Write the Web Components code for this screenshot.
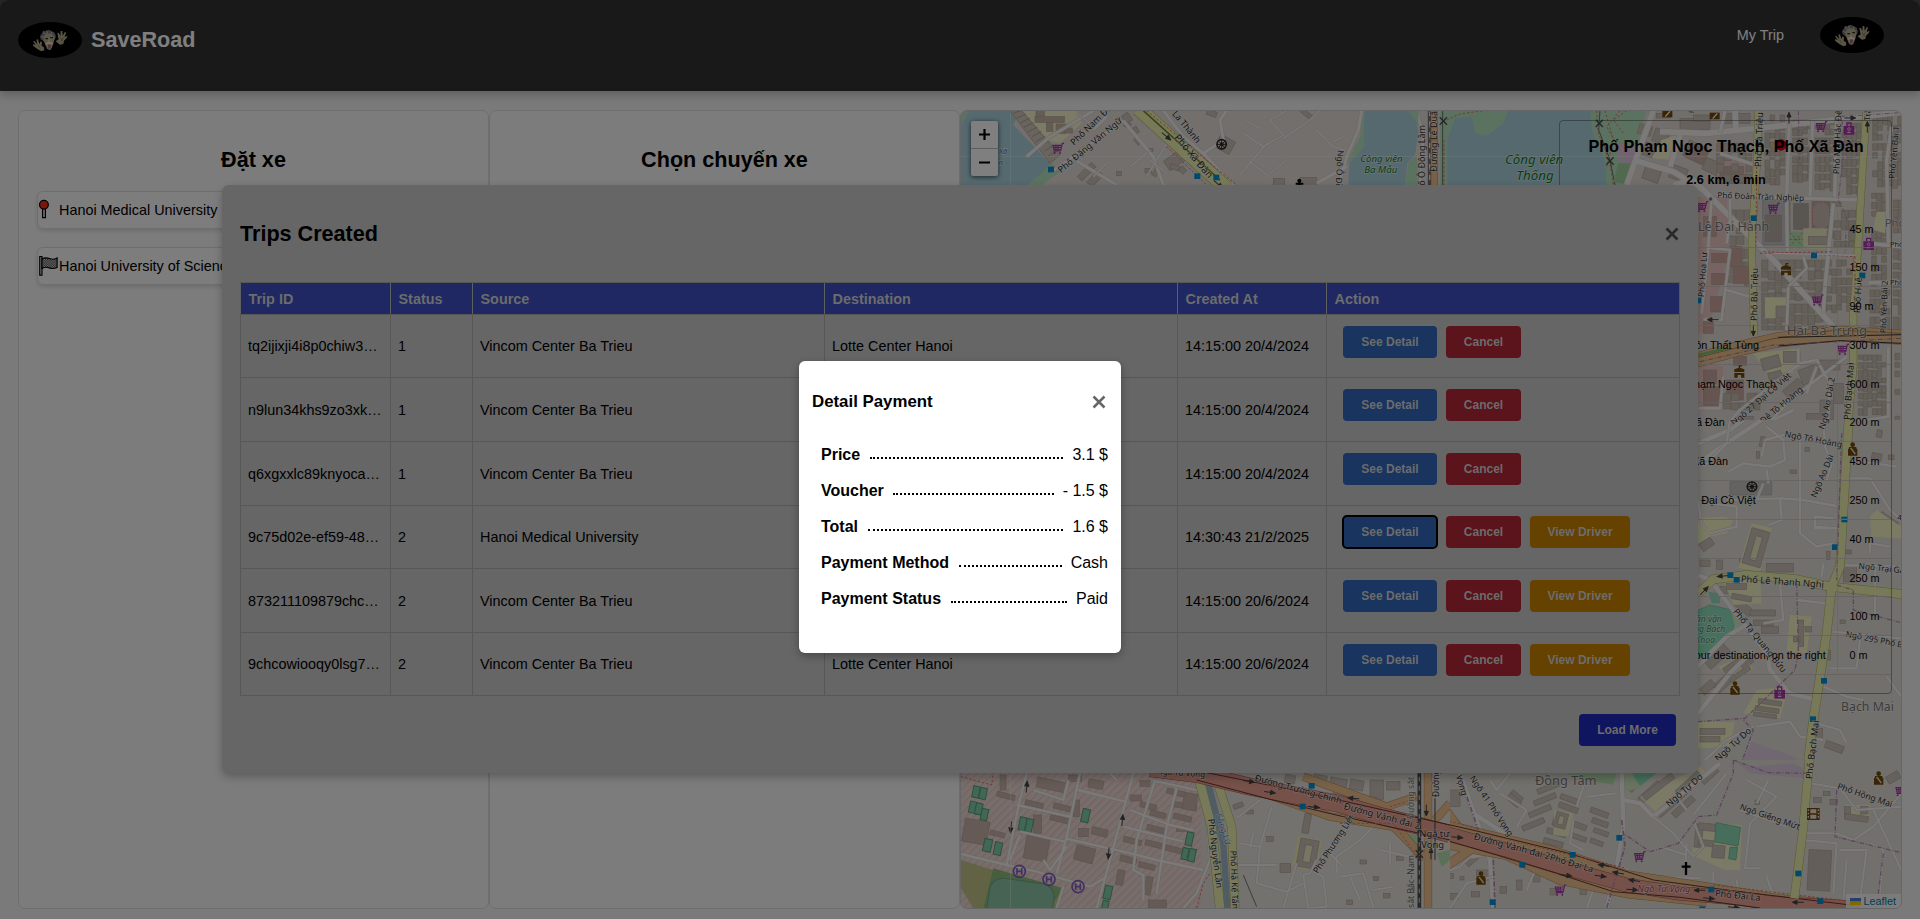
<!DOCTYPE html>
<html lang="vi">
<head>
<meta charset="utf-8">
<title>SaveRoad</title>
<style>
html,body{margin:0;padding:0;height:100%;overflow:hidden;background:#484d55}
body{font-family:"Liberation Sans",Arial,sans-serif;font-size:14.4px;color:#000}
</style>
</head>
<body>
<save-road-app></save-road-app>
<script>
const define = (name, html, setup) => customElements.define(name, class extends HTMLElement {
  connectedCallback() {
    if (this.shadowRoot) return;
    const root = this.attachShadow({ mode: 'open' });
    root.innerHTML = typeof html === 'function' ? html(this) : html;
    if (setup) setup(root, this);
  }
});

/* ---------- brand picture ---------- */
define('brand-avatar', `
<style>:host{display:block;width:64px;height:36px}svg{display:block}</style>
<svg width="64" height="36" viewBox="24 36 192 108">
  <ellipse cx="120" cy="90" rx="96" ry="54" fill="#000"/>
  <path d="M92 88L90 78L96 70L99 62L108 64L115 59L125 63L134 68L138 80L133 90L127 94L101 94Z" fill="#77777d"/>
  <path d="M100 68l7 5M110 62l2 9M126 66l-4 8M94 80l8 2M133 76l-6 5" stroke="#c4c4cb" stroke-width="3"/>
  <path d="M103 76L112 70L127 73L134 84L130 101L125 114L120 121L111 116L105 101L100 91Z" fill="#b9af8f"/>
  <path d="M106 86h8M121 83h8" stroke="#2c2822" stroke-width="4"/>
  <path d="M117 87l-3 10 7 1z" fill="#dacfac"/>
  <path d="M106 99l11-4 12 3-2 6-10-3-9 4z" fill="#e4e0d6"/>
  <path d="M114 104h9l-2 11-6 1z" fill="#a9606b"/>
  <path d="M103 121L94 124L82 117L70 108L68 102L77 105L69 94L73 93L82 102L79 89L84 88L88 102L92 94L96 97L95 107L102 112Z" fill="#b3a988"/>
  <path d="M137 94L146 88L144 80L142 68L147 69L151 79L152 63L157 63L158 77L165 65L168 68L164 81L173 77L170 84L162 92L160 102L150 104Z" fill="#b3a988"/>
  <path d="M82 104l8 10M151 82l5 12M160 82l-4 12" stroke="#6d6650" stroke-width="2"/>
</svg>`);

/* ---------- top bar ---------- */
define('top-bar', `
<style>
:host{display:flex;justify-content:space-between;align-items:flex-start;box-sizing:border-box;height:91px;padding:17px 36px 0 18px;background:#333;color:#fff;border-radius:9px 9px 0 0;box-shadow:0 4px 9px rgba(0,0,0,.22);position:relative}
.brand{display:flex;align-items:center;gap:9px;padding-top:5px;font-weight:bold;font-size:21.6px;line-height:34px}
.brand span{padding-bottom:1px}
nav{display:flex;align-items:center;gap:36px;font-size:14.4px}
</style>
<div class="brand"><brand-avatar></brand-avatar><span>SaveRoad</span></div>
<nav><span>My Trip</span><brand-avatar></brand-avatar></nav>`);

/* ---------- cards ---------- */
define('side-card', `
<style>
:host{display:flex;flex-direction:column;box-sizing:border-box;background:#f9f9f9;border:1px solid #ddd;border-radius:7px;padding:18px}
h2{font-size:21.6px;line-height:25px;margin:18px 0 19px;text-align:center}
.body{display:flex;flex-direction:column;gap:17.5px}
</style>
<h2><slot name="title"></slot></h2><div class="body"><slot></slot></div>`);

define('place-field', `
<style>
:host{display:flex;align-items:center;box-sizing:border-box;height:38px;background:#fbfbfb;border:1px solid #ddd;border-radius:6px;box-shadow:0 2px 4px rgba(0,0,0,.13);font-size:14.4px;white-space:nowrap}
.icon{display:flex;flex:none;width:21px}
</style>
<span class="icon"><slot name="icon"></slot></span><span><slot></slot></span>`);

/* ---------- map ---------- */
const pts = s => 'M' + s.trim().split(/\s+/).join('L');
const area = (s, f, st = 'none') => `<path d="${pts(s)}Z" fill="${f}" stroke="${st}" stroke-width="2"/>`;
const line = (s, c, w, x = '') => `<path d="${pts(s)}" fill="none" stroke="${c}" stroke-width="${w}" stroke-linejoin="round" ${x}/>`;
const roads = (list, w, c = '#f6f4f3', k = '#d3cec9') => list.map(s => line(s, k, w + 3)).join('') + list.map(s => line(s, c, w)).join('');
const yellow = (list, w) => roads(list, w, '#f0f3b2', '#b0b55c');
const orange = (list, w) => roads(list, w, '#eec493', '#b98a50');
const trunk = (list, w) => roads(list, w, '#eaa292', '#a8584c');
const dash = (list, c = '#ef6f68', w = 3, d = '7 6') => list.map(s => line(s, c, w, `stroke-dasharray="${d}"`)).join('');
const label = (t, x, y, r = 0, s = 30, c = '#2e2e2e', x2 = '') =>
  `<text transform="translate(${x} ${y}) rotate(${r})" font-size="${s}" fill="${c}" paint-order="stroke" stroke="rgba(255,255,255,.55)" stroke-width="4" ${x2}>${t}</text>`;
const bld = (s, f = '#cdc2b8') => s.trim().split(/\s*;\s*/).map(q => {
  const [x, y, w, h, r = 0] = q.split(/[ ,]+/).map(Number);
  return `<rect x="${x}" y="${y}" width="${w}" height="${h}" transform="rotate(${r} ${x + w / 2} ${y + h / 2})" fill="${f}" stroke="#b3a699" stroke-width="2"/>`;
}).join('');
let seed = 11;
const rnd = () => (seed = (seed * 16807) % 2147483647) / 2147483647;
const dense = (x0, y0, x1, y1, p = 15, q = 24, r = 0) => {
  let d = '';
  for (let y = y0; y < y1 - 6; y += q + 3) for (let x = x0; x < x1 - 6; x += p) {
    if (rnd() < .12) continue;
    const w = Math.min(p - 1, x1 - x), h = Math.min(q * (.6 + rnd() * .5), y1 - y);
    d += `M${x} ${y.toFixed(0)}h${w}v${h.toFixed(0)}h${-w}z`;
  }
  return `<path d="${d}" transform="rotate(${r} ${(x0 + x1) / 2} ${(y0 + y1) / 2})" fill="#cabfb5" stroke="#b5a89b" stroke-width="2"/>`;
};
const stop = s => s.split(' ').map(q => { const [x, y] = q.split(','); return `<rect x="${x - 9}" y="${y - 8}" width="18" height="17" fill="#0092da"/>`; }).join('');
const at = (x, y, g, r = 0) => `<g transform="translate(${x} ${y}) rotate(${r})">${g}</g>`;
const ARROW = '<path d="M0 16V-6M-6-4L0-18L6-4Z" fill="#444" stroke="#444" stroke-width="3"/>';
const BROWN = '<rect x="-15" y="-10" width="30" height="20" fill="#734a08"/><path d="M-6 8L8-8" stroke="#fff" stroke-width="4"/>';
const COURT = '<circle cy="-14" r="7" fill="#734a08"/><path d="M-11-7h22v5h3v21h-28v-21h3z" fill="#734a08"/><path d="M-6-4L8 14" stroke="#e8ddd0" stroke-width="4"/>';
const TOWN = '<path d="M-15 18V4h30v14h-10v-8h-10v8zM-15 1v-8L-2-12v-7h9v4h-5v3l13 5v8z" fill="#734a08"/>';
const CART = '<path d="M17-15h-5l-5 23M10-9h-26l3 13h20M-8-9l1 13M-1-9v13M-15-3h24M7 8h-22" fill="none" stroke="#ac39ac" stroke-width="3.500"/><circle cx="-11" cy="14" r="3" fill="#ac39ac"/><circle cx="5" cy="14" r="3" fill="#ac39ac"/>';
const SHOP = '<path d="M-16-8h32v26h-32z" fill="#ac39ac"/><path d="M-6-8v-9h12v9" fill="none" stroke="#ac39ac" stroke-width="4"/><circle cy="1" r="4" fill="none" stroke="#fff" stroke-width="2"/><path d="M-5 11h10" stroke="#fff" stroke-width="3"/>';
const WHEEL = '<circle r="14" fill="none" stroke="#2d2d2d" stroke-width="5"/><circle r="6" fill="#2d2d2d"/><path d="M0-16V16M-16 0H16M-11-11L11 11M11-11L-11 11" stroke="#2d2d2d" stroke-width="3"/>';
const CROSSX = '<path d="M-11-11L11 11M11-11L-11 11" stroke="#4a4a4a" stroke-width="4"/>';
const HELI = '<circle r="18" fill="none" stroke="#8461c4" stroke-width="5"/><path d="M-7-10V10M7-10V10M-7 0H7" stroke="#8461c4" stroke-width="5"/>';
const BAR = '#6d6d6d';
const darkG = '#0d7a28';

const topStrip = `
<rect x="33" y="32" width="1437" height="240" fill="#e4dfd8"/>
${area('33,32 210,32 190,75 305,195 235,255 33,255', '#aad3df')}
${area('33,32 60,32 33,75', '#b9e4c0')}${area('235,255 305,190 330,215 275,255', '#b9e4c0')}
${area('215,32 380,32 395,70 330,130 290,120 230,60', '#f7f6cf')}
${bld('255 50 88 17;289 67 20 27;258 32 25 18;318 72 30 28;345 84 22 15', '#c9b9a4')}
${area('180,32 215,32 330,165 300,190', '#d3c8bd', '#a69a8e')}
<path d="M190 40l28-10M200 54l28-12M212 68l28-14M222 82l28-14M234 96l28-15M246 110l28-16M258 125l26-16M270 139l26-16M283 153l26-16M294 168l24-14" stroke="#9c9085" stroke-width="2"/>
${bld('520 40 22 28 -35;522 68 20 14 20;548 84 20 12 60;556 112 14 22 -40;595 145 14 10;645 165 55 35 -35;660 195 30 14 20;380 205 60 20 -45;410 225 50 22 -45;500 215 14 12;585 205 20 14;800 112 50 42 30;970 236 34 20;1050 232 50 24;690 200 16 20 -40;1050 35 40 14 40;770 32 30 16 20;610 205 14 24 30')}
${roads(['230,170 300,110 430,32', '305,215 520,62', '520,62 560,110 610,170 640,255', '375,180 500,255', '640,32 700,110 760,160 850,255', '760,160 820,120 810,60 830,32', '430,90 470,50', '1235,32 1225,90 1190,170 1180,210 1165,255', '1100,250 1190,200', '1400,40 1420,100 1410,255'], 9)}
${roads(['880,100 940,140 1000,105 960,60 1010,32', '885,60 930,85', '1000,115 1080,60 1110,32', '1100,90 1150,140 1185,150', '1150,125 1180,110', '870,225 950,130', '590,230 650,130', '600,180 650,220', '540,200 600,150', '430,230 470,190', '960,220 1010,180', '420,70 380,40', '900,185 960,230'], 4)}
${yellow(['565,25 830,265'], 42)}${line('580,32 810,240', '#6a8d2e', 5)}${dash(['590,32 860,255', '650,140 770,255'])}
${area('1243,32 1375,32 1400,60 1405,100 1395,165 1372,190 1365,255 1195,255 1198,190 1240,140', '#aad3df')}
${area('1240,32 1243,140 1200,185 1190,190 1230,110', '#b9e4c0')}${area('1375,190 1400,165 1405,255 1365,255', '#b9e4c0')}${area('1375,32 1405,32 1405,75', '#b9e4c0')}
${line('1439,32 1439,255', '#77716c', 11)}${line('1439,32 1439,255', '#eee', 4, 'stroke-dasharray="16 16"')}
${orange(['1453,32 1453,255'], 18)}${dash(['1480,32 1480,255', '1492,32 1492,255'], '#e07a4f')}
${at(325, 145, CART)}${stop('303,208 742,228 799,232')}${at(815, 133, WHEEL)}${at(648, 108, ARROW, 130)}${at(804, 252, ARROW, 130)}
${at(1480, 63, CROSSX)}<circle cx="1048" cy="242" r="6"/><path d="M1037 251h23M1048 245v12" stroke="#000" stroke-width="6"/>
${label('Phố Nam Đồng', 372, 137, -44, 27)}${label('Phố Đặng Văn Ngữ', 333, 220, -40, 27)}${label('La Thành', 665, 42, 50, 27)}
${label('Phố Xã Đàn', 671, 113, 50, 30)}${label('Phố Ô Đông Lầm', 1426, 290, -90, 27)}${label('Đường Lê Duẩn', 1461, 215, -90, 27)}${label('Ngõ Ô Đồng Lầm', 1163, 150, 93, 25)}
${label('Công viên', 1231, 186, 0, 29, darkG, 'font-style="italic"')}${label('Ba Mẫu', 1243, 218, 0, 29, darkG, 'font-style="italic"')}
${label('Xã', 146, 162, 0, 24, '#4f83ad', 'font-style="italic"')}${label('Đàn', 116, 196, 0, 24, '#4f83ad', 'font-style="italic"')}`;

const rightTop = `
${area('0,32 620,32 560,255 0,255', '#b9e4c0')}
${area('205,32 450,32 458,100 495,180 500,255 22,255 22,120 45,55 95,50 105,100 140,108 190,70', '#aad3df')}
${dash(['12,120 12,255', '20,60 60,42 130,32', '470,32 475,100 510,190 520,255', '495,32 520,120 500,200', '540,32 500,80 540,150', '560,32 520,60 550,100'])}
${line('8,32 8,255', BAR, 3)}${line('480,32 476,90 510,180 525,255', BAR, 3)}
${area('535,190 580,190 570,255 520,245', '#a0d39f')}${area('530,130 600,140 590,192 535,185', '#e3c9df')}
${area('620,32 1384,32 1384,1020 700,1020 700,255 560,255', '#e3ddd6')}
${bld('595 75 40 30 15;640 90 45 40 20;610 205 50 38 20;650 40 40 14;720 55 90 34;735 130 60 50 25;790 185 70 38 25;830 205 80 45 0;610 130 36 40 20;690 200 50 40 20;850 40 80 30;760 45 50 20')}
${area('665,120 710,105 700,180 635,175', '#f8f6d0')}${area('830,165 920,180 930,240 830,235', '#ecccc6')}
${bld('740 140 60 45 25;840 200 70 40', '#cdaea6')}
${dense(975, 45, 1040, 255)}${dense(1058, 60, 1115, 255)}${dense(1125, 60, 1182, 280)}${dense(1205, 70, 1262, 290)}${dense(1298, 50, 1384, 270)}${dense(830, 130, 935, 255, 22, 28)}
${dense(1160, 300, 1250, 440, 22, 28)}${dense(1295, 280, 1340, 560)}${dense(1360, 300, 1384, 700)}${dense(965, 480, 1160, 690, 20, 30)}${dense(1160, 480, 1240, 640)}${dense(865, 330, 932, 560, 24, 36)}${dense(1290, 570, 1350, 690)}
${area('775,290 860,290 870,450 800,700 775,700', '#efc9c4')}${bld('815 460 50 28;815 520 46 34;812 590 42 46;790 660 30 40;870 440 36 60;880 500 50 50;790 350 40 60', '#cfa79e')}
${area('968,300 1050,300 1050,435 968,435', '#c9c6c8', '#a9a6a8')}${bld('975 345 50 80;1060 310 45 78;1116 305 52 80', '#b9afa7')}
<rect x="1117" y="306" width="52" height="80" rx="24" fill="#cdbdb5" stroke="#ef8178" stroke-width="3" stroke-dasharray="6 5"/><rect x="1062" y="308" width="44" height="82" rx="20" fill="#b2aaa3"/>
${area('1048,395 1090,395 1090,440 1048,440', '#b7e3b3')}${dash(['1050,398 1088,438', '1088,398 1050,438', '1048,418 1090,418'])}
${area('1090,385 1160,385 1160,450 1090,445', '#efecc7')}${bld('1105 410 60 24')}
${area('975,592 1040,592 1045,655 975,655', '#f7f6c9')}${bld('1008 618 28 36')}${area('1310,335 1340,335 1335,400 1300,390', '#f7f6c9')}
${area('940,760 1080,745 1060,820 980,815', '#f7f6c9')}${bld('965 770 55 36 -15;1030 755 50 32;985 815 40 20 -15')}
${area('775,780 850,800 840,925 775,925', '#efc9c4')}${bld('790 810 40 40;790 860 50 56;860 840 50 60;880 770 40 26', '#cda9a0')}
${dense(850, 880, 960, 930, 24, 26)}${bld('1080 800 60 46 -20;1030 850 60 30 -40;1140 900 40 60;1100 940 50 40;900 950 40 30;980 970 50 24')}${dense(1255, 765, 1345, 950, 14, 20)}${dense(1365, 760, 1384, 980)}${bld('1140 780 60 30;1180 850 30 60')}
${roads(['700,255 760,240 800,280 1000,480 1180,680', '640,32 560,255', '580,180 700,215 790,270', '660,95 800,100 1000,80 1384,36', '720,105 690,200', '885,32 888,90'], 17)}
${roads(['1048,70 1040,290 1042,455', '1118,60 1110,290', '1190,32 1184,300', '1355,80 1340,180 1345,430', '840,160 945,195', '855,32 840,100'], 10)}
${roads(['830,285 1000,292 1260,300', '1180,310 1155,560 1150,640', '1290,430 1384,440', '1285,548 1384,548'], 11)}
${roads(['815,290 805,440 785,640', '800,442 870,450 845,660 790,658', '870,290 870,360 860,430', '860,570 930,590', '1045,560 1100,505 1090,470', '1045,560 1040,690', '775,925 840,925 850,830', '820,1020 900,930 1080,790 1130,780 1170,850 1160,1020', '940,1020 1050,900 1220,770', '1075,800 1075,745', '1130,800 1100,880', '1345,740 1345,950 1250,965', '1250,965 1310,1000 1384,1000', '1000,960 1060,930', '700,950 775,950'], 8)}
${yellow(['955,32 950,200 935,420 942,705', '1280,32 1268,200 1255,430 1240,640 1240,800 1220,1020'], 20)}
${dash(['970,455 1245,470', '950,200 948,440', '1245,470 1245,640', '960,460 1180,455'])}${line('1000,460 1245,466', '#fff', 4)}
${dash(['1205,60 1215,120 1195,300 1220,350 1215,460', '1200,50 1384,38', '1075,32 1080,200'], '#b98db8', 3, '14 5 3 5')}
${orange(['770,780 900,745 1010,720 1200,700 1384,712'], 42)}${line('775,772 1000,716 1190,690 1384,700', '#b78548', 3)}${line('1015,712 1384,704M1015,738 1200,722 1384,730', '#333', 3)}${dash(['780,785 1000,735 1384,715'], '#a3778d', 3, '14 5 3 5')}${line('775,765 860,745', '#7fc47a', 8)}
${at(10, 63, CROSSX)}${at(478, 70, CROSSX)}${at(510, 183, CROSSX)}${at(682, 42, BROWN)}${at(824, 48, BROWN)}${at(1047, 55, ARROW)}${at(1229, 54, ARROW, 90)}${at(1282, 82, ARROW)}${at(940, 690, ARROW, 180)}${at(820, 659, ARROW, -90)}
${at(1145, 80, CART)}${at(1227, 86, SHOP)}${at(1002, 325, CART)}${at(788, 320, CART)}${at(1134, 600, CART)}${at(1210, 748, CART)}${at(1286, 432, SHOP)}${at(1038, 508, TOWN)}${at(898, 815, TOWN)}
<circle cx="1023" cy="135" r="17" fill="#e00015"/><circle cx="812" cy="297" r="5" fill="#777"/>
${stop('941,354 1122,466 1267,526 775,601')}
${label('Công viên', 195, 192, 0, 40, darkG, 'font-style="italic"')}${label('Thống', 229, 240, 0, 40, darkG, 'font-style="italic"')}
${label('Phố Đoàn Trần Nghiệp', 832, 294, 2, 24.500)}${label('Phố Bà Triệu', 964, 202, -88, 28)}${label('Phố Bà Triệu', 951, 663, -89, 27)}${label('Phố Huế', 1260, 640, -87, 27)}${label('Phố Mai Hắc Đế', 1198, 223, -88, 26)}${label('Phố Yên Bái 1', 1364, 237, -85, 25)}${label('Phố Yên Bái 2', 1338, 700, -88, 25)}${label('Phố Hoa Lư', 792, 592, -86, 25)}
${label('Lê Đại Hành', 774, 394, 0, 37.500, '#777')}${label('Hai Bà Trưng', 1040, 706, 0, 39.500, '#777')}${label('Phố', 1334, 381, 0, 34, '#888')}${label('Phố', 1350, 440, 0, 22)}${label('Phố', 1350, 554, 0, 22)}
${label('Ngõ 27 Đại Cồ Việt', 884, 978, -41, 26)}${label('Đê Tô Hoàng', 970, 972, -40, 26)}${label('Ngõ Ao Dài 2', 1157, 990, -80, 26)}${label('Phố Bạch Mai', 1230, 960, -86, 27)}${label('Trần', 1290, 62, -88, 24)}${label('P', 762, 40, -88, 22)}`;

const rightMid = `
${area('24,0 634,0 634,1040 24,1040', '#e5e0d9')}
${bld('210 50 14 30 10;345 82 14 12;200 95 8 20;560 30 16 22 10;545 100 30 20 10;596 105 16 14;150 410 60 30 -10;30 420 30 20;80 420 18 28;90 500 60 20;130 550 60 24 40;460 440 40 46;455 390 30 12;410 395 10 24;410 690 12 30;30 360 40 26 -35;450 600 16 10;300 150 20 10;565 290 60 20 35;230 430 80 26;180 570 76 18;190 600 60 16;215 620 50 20;40 690 80 36 -42;70 770 70 30 -42;30 790 46 24 -42;150 720 40 20 -42;380 925 18 34;405 970 56 22 20')}
${area('24,295 100,290 130,300 110,340 60,350 24,370', '#f7f6c9')}${area('185,310 245,325 210,455 145,445', '#f7f6c9')}${bld('170 328 56 110 16')}${bld('188 348 20 74 16', '#efecc7')}
${area('540,290 560,270 634,320 634,355 545,350', '#f7f6c9')}${area('95,470 210,470 215,550 130,555', '#f7f6c9')}${bld('110 490 60 18;125 525 60 16 10')}${area('300,585 365,590 350,700 290,695', '#f7f6c9')}${bld('325 600 16 80;345 620 20 16;310 650 20 16')}
${area('85,740 150,710 190,745 130,790', '#f7f6c9')}${bld('105 722 70 50 -35')}${bld('122 736 34 22 -35', '#efecc7')}${area('200,810 295,800 270,895 160,880', '#f7f6c9')}${bld('205 840 70 14 8;195 862 72 14 8;190 880 70 12 8')}${area('24,905 135,905 120,980 24,985', '#f7f6c9')}${bld('30 925 75 18;30 950 60 16')}
${area('55,515 90,520 90,550 65,550', '#8fe0bd')}${area('24,570 60,555 125,570 135,610 120,650 90,680 24,710', '#8fe0bd', '#6dbf98')}${area('90,540 160,600 140,640 120,560', '#cfeecb')}
${area('120,185 245,185 245,225 120,225', '#c9c6c5', '#b0acab')}
${area('185,965 300,1005 345,1030 340,1060 225,1050 150,1030', '#e3cfe2')}
${roads(['24,465 60,480 230,700 240,750 300,820 380,840', '24,740 60,700 110,650 160,620', '24,880 120,760 190,690', '24,70 120,30 160,0', '40,120 80,90 215,0'], 13)}
${roads(['120,0 110,70 40,140', '115,155 160,130 240,140 285,120 280,60 230,20', '330,60 330,340 380,380 430,370', '110,240 270,235 340,240 440,258', '60,340 140,320 140,260 60,250', '440,175 540,175 600,270 634,300', '400,0 405,80 425,130 410,180', '270,235 275,300 235,315', '375,320 440,325 375,325 375,290 430,295', '440,435 634,440', '430,635 634,655', '590,770 634,830', '420,745 500,745 510,660', '400,800 470,830 520,840', '24,240 34,310 50,330', '320,540 410,550', '400,430 395,470', '230,150 235,190', '215,110 225,60 300,40', '380,910 450,930 470,970', '200,920 300,905 330,950 400,960', '24,1040 110,960 190,920', '270,490 280,600 220,610', '555,440 555,600', '540,400 540,370 600,380', '480,120 620,140', '220,190 200,240'], 7)}
${yellow(['476,0 450,440 425,500 410,640 370,900 350,1060', '24,520 70,478 170,465 320,478 420,500 634,522'], 25)}
${dash(['455,40 440,480'], '#b98db8', 4, '14 5 3 5')}${dash(['320,490 325,700 315,750 160,900 190,930 150,1040', '24,905 165,895', '440,495 490,510 490,570 634,608'], '#b98db8', 4, '14 5 3 5')}
${at(186, 200, WHEEL)}${at(488, 88, COURT)}${at(135, 805, COURT)}${at(269, 818, SHOP)}${at(100, 468, ARROW, -95)}${at(42, 513, ARROW, 45)}
${stop('463,298 435,381 121,465 140,479 402,782 369,897')}${line('456,298 471,298', '#fff', 3)}
${label('Ngõ Tô Hoàng', 283, 50, 11, 26)}${label('Ngõ Ao Dài', 378, 235, -67, 26)}${label('Ngõ', 402, 30, -70, 26)}${label('Phố Lê Thanh Nghị', 152, 486, 4, 28)}${label('Phố Tạ Quang Bửu', 128, 575, 51, 27)}${label('Ngõ Trại Găng', 505, 446, 6, 25)}${label('Ngõ 295 Phố Bạch Mai', 466, 650, 11, 25)}
${label('Bạch Mai', 453, 873, 0, 37, '#777')}${label('Sân vận', 14, 605, 0, 26, '#3f8b5d', 'font-style="italic" dx="-10"')}${label('động Bách', -6, 637, 0, 26, '#3f8b5d', 'font-style="italic" dx="-12"')}${label('Khoa', 16, 668, 0, 26, '#3f8b5d', 'font-style="italic"')}
${label('Phố Bạch Mai', 366, 1079, -83, 28)}${label('Ngõ Tự Do', 85, 1025, -42, 27)}${label('Ng', 130, 15, -40, 26)}${label('4', 622, 300, 0, 24)}`;

const bottomLeft = `
<rect x="33" y="40" width="720" height="404" fill="#efdad6"/><rect x="33" y="40" width="720" height="404" fill="url(#hatch)"/>
<path d="M800 40H1500V444H830Z" fill="#e8e4dd"/>
${area('33,300 340,395 325,444 70,444 33,385', '#c3c788')}${area('130,325 340,385 300,444 100,444', '#90bd7c')}<rect x="118" y="362" width="195" height="130" rx="40" fill="#8cc6a7" stroke="#6aa884" stroke-width="3" transform="rotate(8 210 400)"/>
${bld('150 45 18 45;260 60 90 30 12;355 45 40 20;415 60 45 25 10;140 100 55 15 15;225 125 55 16 14;310 135 60 16 14;370 120 18 50;250 165 25 55;300 170 60 16 14;385 205 30 25;425 205 48 22 14;40 180 75 70 10;225 230 70 70 10;375 260 58 45 15;570 62 30 18;540 105 34 18;570 130 50 16 14;650 90 60 16 14;600 155 48 16 14;670 130 70 16 10;670 165 55 16 14;520 235 55 16 14;590 200 60 16 14;585 245 55 16 14;640 260 60 16 14;510 290 50 18 14;565 310 50 16 14;500 330 22 45 10;585 350 20 55 10;595 420 55 22;680 200 30 14;120 215 45 14 14;700 100 40 50 10', '#cbb5ad')}
${[[72, 77, 20, 34], [93, 82, 20, 34], [62, 123, 20, 34], [80, 128, 20, 34], [97, 145, 20, 34], [212, 170, 20, 40], [232, 175, 20, 40], [400, 145, 22, 40], [105, 235, 24, 38], [137, 245, 22, 38], [713, 215, 20, 40], [700, 262, 18, 35], [720, 265, 20, 38], [467, 375, 22, 40], [460, 420, 18, 28]].map(([x, y, w, h]) => `<rect x="${x}" y="${y}" width="${w}" height="${h}" fill="#82d0ac" stroke="#5d9e7c" stroke-width="3" transform="rotate(12 ${x} ${y})"/>`).join('')}
${roads(['230,40 205,140 170,315', '390,40 350,230 320,340', '550,40 520,150 480,300 440,444', '33,282 170,315 260,335 420,380', '200,135 360,170', '210,215 345,245', '345,235 520,275 620,300 760,330', '385,90 525,125', '615,60 560,240 550,330 580,345 580,420', '680,85 650,200 620,400', '520,200 700,245', '540,150 660,195 730,210', '610,62 760,95', '180,300 210,225', '280,300 300,330 350,260', '420,380 470,350', '770,160 780,300 740,400 700,444', '340,380 320,444', '250,90 340,120 355,60', '500,60 480,40'], 7)}
${bld('850 130 30 14 -20;890 150 20 12;950 230 20 14;1005 45 30 25 10;1090 45 40 30 10;1140 55 50 30 10;1200 60 40 30 10;1150 90 60 30 10;1260 60 40 60;1310 65 40 25;1060 160 20 60 10;990 310 32 28;1240 110 40 30 10;1270 350 16 12;1230 300 20 12;1300 400 20 14;1190 420 18 14;1340 290 20 12;1380 380 14 18')}
${area('1045,228 1115,242 1095,335 1028,320', '#f4f2b4')}${bld('1045 238 56 85 10')}${bld('1062 255 22 52 10', '#efecc7')}
${area('1340,215 1400,225 1400,260 1380,270', '#b9dfb0')}${area('1460,280 1500,270 1500,300 1475,320', '#b9dfb0')}
${roads(['965,140 930,260 920,370 1010,395 1060,370', '865,315 980,315', '870,250 935,262', '1100,300 1080,340 1060,345 1075,444 1130,440 1120,350 1090,335', '1200,190 1160,250 1110,300', '1160,340 1160,290 1230,240 1290,180', '1170,350 1240,340 1270,444', '1200,350 1230,420', '1290,270 1380,290', '1270,390 1330,380', '1040,310 1000,444', '860,175 930,120', '1130,270 1160,300 1180,320', '1320,250 1320,310', '900,260 910,220'], 6)}
${line('880,345 920,440', '#7a766e', 3)}
${yellow(['745,50 785,200 810,444'], 26)}${line('775,70 820,250 832,444', '#9fb9c8', 19)}${yellow(['800,60 845,200 855,444'], 24)}
${orange(['860,70 1140,170 1330,200 1420,290', '1060,50 1310,140 1400,110', '1434,40 1434,444', '1500,130 1455,180', '1420,300 1350,210'], 22)}${trunk(['600,25 740,42 900,80 1160,130 1300,170 1500,222'], 50)}
${line('740,60 960,118 1180,170 1500,240M760,36 1040,92 1300,150 1500,195', '#70332b', 3)}
${line('1408,40 1408,444', '#4d4d4d', 11)}${line('1408,50 1408,444', '#b8b8b8', 4, 'stroke-dasharray="14 14"')}${line('1455,115 1455,300', '#444', 3)}
${dash(['1170,190 1330,190 1410,300', '740,444 760,370 780,340', '33,50 125,75 130,40', '1320,140 1400,115'])}
${stop('1085,77 1058,139')}${at(208, 334, HELI)}${at(297, 358, HELI)}${at(384, 380, HELI)}
${at(230, 82, ARROW, 5)}${at(183, 200, ARROW, 185)}${at(517, 182, ARROW, 5)}${at(476, 278, ARROW, 185)}${at(895, 64, ARROW, 98)}${at(958, 97, ARROW, 98)}${at(1090, 141, ARROW, 95)}${at(1212, 115, ARROW, -85)}${at(1429, 150, ARROW, 180)}${at(1443, 282, ARROW)}${at(1408, 282, CROSSX)}
${label('Đường Trường Chinh', 913, 62, 15, 27)}${label('Đường Vành đai 2', 1180, 147, 15, 28)}${label('Ngã tư', 1408, 232, 0, 28)}${label('Vọng', 1414, 264, 0, 28)}${label('Phố Nguyễn Lân', 774, 178, 83, 27)}${label('Phố Hà Kế Tấn', 841, 272, 88, 26)}${label('Sông Lừ', 797, 165, 72, 25, '#5b8fc0')}${label('Phố Phương Liệt', 1103, 342, -57, 26)}
${label('Đường sắt', 1391, 178, -90, 26, '#777')}${label('sắt Bắc–Nam', 1391, 444, -90, 26, '#666')}${label('Đường', 1467, 112, -90, 26)}${label('Ngã Tư Vọng', 620, 42, 4, 24)}`;

const bottomRight = `
${area('0,0 1384,0 1384,444 0,444', '#e5e0d9')}
${bld('5 90 55 50;210 100 40 16 40;290 75 70 16 -22;280 110 70 16 -22;265 145 70 16 -22;245 185 70 16 -22;360 110 60 16 20;355 135 60 16 20;340 160 46 40 15;400 190 40 16 20;390 225 50 14 20;450 150 56 16 20;455 180 50 16 20;460 210 46 14 20;450 240 40 14 20;320 210 60 16 15;310 240 60 16 15;560 60 60 20 -42;590 85 80 22 -42;640 110 90 22 -42;690 130 80 20 -42;720 60 60 20 -42;780 40 60 16 -42;200 110 44 22 40;1150 95 20 12;1120 112 24 16;1170 118 22 16;1340 40 40 24 -30;945 120 14 14;75 290 40 20 -40;110 330 40 30;20 340 20 16;30 400 24 18;60 350 12 10;230 360 16 30;280 340 20 26;330 385 24 20;5 310 24 16;180 380 20 20;420 380 20 24;95 395 24 16')}
${area('342,150 400,160 385,230 340,225', '#f5f3cc')}${bld('345 158 36 46 15')}${bld('355 168 16 26 15', '#efecc7')}
${area('550,40 640,40 600,85 550,95', '#d0e8c0')}${area('575,40 650,40 600,78', '#8fdcb8')}${area('375,40 530,40 520,75 440,60', '#b9e0b0')}
${area('600,110 780,20 800,40 650,160', '#f6f5cf')}${bld('600 70 110 20 -38;640 118 110 22 -42;700 60 90 20 -42')}
${area('770,185 905,195 900,330 855,330 755,285', '#f5f4cd')}${bld('765 192 22 70 6;775 190 50 22 6;775 240 46 18 6;816 256 38 38 5')}${area('828,188 902,202 894,258 824,246', '#8fdcb8', '#67ad8a')}${area('870,262 893,262 888,300 866,296', '#8fdcb8', '#67ad8a')}
${area('1215,135 1290,135 1285,190 1210,175', '#f5f4cd')}${bld('1213 140 18 36;1215 165 70 18 8;1262 140 22 22')}${bld('1104 270 68 122 3', '#c6bcb3')}
${area('880,0 930,20 1060,10 1100,30 1100,55 930,40', '#dfcde0')}
${roads(['60,40 120,210 150,300 160,444', '545,40 550,200 530,320 500,444', '550,120 600,130 640,170 840,10', '100,160 200,225', '85,290 150,280'], 13)}
${roads(['210,40 170,90 150,60', '180,100 260,150 230,200', '400,180 390,250 430,270', '640,170 700,220 760,290 790,260 760,180', '920,60 1010,110 930,190 915,325 960,325', '900,150 1040,200', '985,60 950,130', '1110,70 1200,85 1250,150 1384,140', '1090,220 1190,220 1240,240 1300,200 1384,100', '1090,240 1190,250 1180,400', '1200,270 1280,270 1260,420', '1290,250 1330,270 1320,400', '1220,300 1210,420', '980,350 1000,410', '820,335 820,400', '630,350 780,355', '740,250 735,330', '440,110 530,100', '430,80 410,140', '760,165 860,40', '660,260 740,285', '0,340 60,320 90,290', '260,390 290,320', '30,444 80,370 160,350', '440,444 460,390', '610,360 550,320', '890,360 895,400', '1300,150 1384,330', '700,100 740,150'], 6)}
${orange(['0,190 100,215 330,270 560,345 820,385 1000,415 1240,440', '0,250 200,285 360,360 560,400 800,425', '0,130 60,210', '0,330 90,270'], 26)}
${trunk(['0,215 200,270 360,320 560,375 720,400 900,415 1000,430 1260,444'], 40)}
${line('0,188 110,213 380,278 640,360 860,390 1240,436M0,236 170,285 350,340 520,395 720,412 960,444', '#70332b', 3)}${dash(['130,220 330,270 560,325', '820,375 1240,425', '15,180 110,205'])}
${yellow(['1108,0 1090,200 1063,415'], 24)}
${dash(['60,50 115,210', '160,300 165,444', '545,180 555,260 500,444'], '#b98db8', 5, '16 6 4 6')}${dash(['880,0 880,40 830,165 775,170 715,250 630,275 550,220', '1190,90 1185,230 1384,278', '1330,280 1310,440', '880,0 985,38 1100,40'], '#b98db8', 4, '14 5 3 5')}
${at(123, 355, COURT)}${at(1316, 55, COURT)}${at(600, 290, CART)}${at(362, 390, CART)}${at(1384, 92, CART)}
<path d="M738 306V345M725 320H752" stroke="#000" stroke-width="7"/>
<path d="M1101 144h38v36h-38z" fill="#734a08"/><path d="M1111 148h18v12h-18zM1111 164h18v12h-18zM1103 148h4v5h-4zM1103 158h4v5h-4zM1103 168h4v5h-4zM1133 148h4v5h-4zM1133 158h4v5h-4zM1133 168h4v5h-4z" fill="#f1e8da"/>
${stop('538,233 398,284 247,314 158,426 814,388 1075,340 1141,423 787,447')}
${at(50, 232, ARROW, 95)}${at(493, 317, ARROW, -80)}${at(377, 346, ARROW, 98)}${at(480, 348, ARROW, 98)}${at(536, 339, ARROW, -80)}${at(584, 362, ARROW, -80)}${at(575, 389, ARROW, 95)}${at(780, 391, ARROW, -90)}${at(805, 415, ARROW, 95)}${at(1075, 427, ARROW, -90)}${at(880, 442, ARROW, 95)}
${label('Ngõ 41 Phố Vọng', 88, 55, 56, 26)}${label('Vọng', 48, 48, 74, 26)}${label('Đồng Tâm', 285, 75, 0, 38.500, '#777')}${label('Đường Vành đai 2', 100, 238, 15, 28)}${label('Phố Đại La', 328, 300, 16, 27)}${label('Ngõ Tư Vọng', 592, 397, 0, 28, '#b04560', 'font-style="italic"')}${label('Phố Đại La', 824, 409, 6, 27.500)}
${label('Ngõ Tự Do', 688, 142, -41, 27)}${label('Ngõ Giếng Mứt', 898, 148, 19, 26)}${label('Phố Hồng Mai', 1190, 86, 19, 26)}${label('Phố', 1116, 58, -84, 27)}`;

const tile = (x, y, clip, g) => `<g transform="translate(${x} ${y}) scale(.33333)"><g clip-path="url(#${clip})">${g}</g></g>`;

define('city-map', () => `
<style>
:host{display:block;box-sizing:border-box;position:relative;border:1px solid #ccc;border-radius:7px;overflow:hidden;background:#e4dfd8}
svg.tiles{display:block;font-family:"Noto Sans",sans-serif}
::slotted(*){position:absolute}
</style>
<svg class="tiles" width="940" height="797" viewBox="961 111 940 797">
<defs>
<pattern id="hatch" width="17" height="17" patternUnits="userSpaceOnUse" patternTransform="rotate(45)"><rect width="3" height="17" fill="#e6c4bf"/></pattern>
<clipPath id="ca"><rect x="33" y="32" width="1437" height="240"/></clipPath>
<clipPath id="cb"><rect x="0" y="32" width="1384" height="928"/></clipPath>
<clipPath id="cc"><rect x="0" y="0" width="640" height="1020"/></clipPath>
<clipPath id="cd"><rect x="33" y="0" width="1467" height="444"/></clipPath>
<clipPath id="ce"><rect x="30" y="0" width="1354" height="444"/></clipPath>
</defs>
${tile(950, 100, 'ca', topStrip)}${tile(1440, 100, 'cb', rightTop)}${tile(1690, 420, 'cc', rightMid)}${tile(950, 760, 'cd', bottomLeft)}${tile(1440, 760, 'ce', bottomRight)}
<path d="M1010.500 111V908M961 156.500H1901" stroke="#fff" stroke-opacity=".3"/>
</svg>
<slot></slot>`);

define('map-zoom', `
<style>
:host{display:flex;flex-direction:column;width:27px;border-radius:2px;background:#fff;box-shadow:0 1px 5px rgba(0,0,0,.65);left:10px;top:10px}
span{display:flex;align-items:center;justify-content:center;height:27px}
span+span{border-top:1px solid #bbb}
svg{display:block}
</style>
<span><svg width="13" height="13"><path d="M6.500 1V12M1 6.500H12" stroke="#000" stroke-width="2.200"/></svg></span>
<span><svg width="13" height="13"><path d="M1 6.500H12" stroke="#000" stroke-width="2.200"/></svg></span>`);

define('map-credit', `
<style>
:host{display:flex;align-items:center;gap:3px;padding:0 5px 0 4px;height:14px;right:0;bottom:0;background:rgba(255,255,255,.8);font-size:10.8px;line-height:14px;color:#0078a8}
</style>
<svg width="11" height="7"><path d="M0 0H11V3.500H0Z" fill="#4c7be1"/><path d="M0 3.500H11V7H0Z" fill="#ffd500"/></svg><span>Leaflet</span>`);

const STEPS = [['', '45 m'], ['', '150 m'], ['', '90 m'], ['Phố Tôn Thất Tùng', '300 m', 1760], ['Phố Phạm Ngọc Thạch', '600 m', 1777], ['Phố Xã Đàn', '200 m', 1725.7], ['Phố Xã Đàn', '450 m', 1729], ['Đường Đại Cồ Việt', '250 m', 1756.7], ['', '40 m'], ['', '250 m'], ['', '100 m'], ['at your destination, on the right', '0 m', 1826.7]];
define('route-panel', () => `
<style>
:host{display:block;box-sizing:border-box;left:598px;top:9px;width:333px;height:574px;border:1px solid rgba(70,70,70,.5);border-radius:4px;font-size:10.8px}
h2{margin:16px 0 0;font-size:16.200px;line-height:19px;text-align:center;padding-left:19px;padding-right:18px;white-space:nowrap}
h3{margin:17px 0 0;font-size:12.636px;line-height:15px;text-align:center;padding-left:1px}
.steps{margin-top:21.500px}
.row{display:grid;grid-template-columns:277px 44px;height:38.800px;box-sizing:border-box;border-bottom:1px solid rgba(200,195,190,.8);line-height:38.800px}
.row span{text-align:right;white-space:nowrap}
.row b{font-weight:normal;border-left:1px solid rgba(200,195,190,.5);padding-left:11.500px}
</style>
<h2>Phố Phạm Ngọc Thạch, Phố Xã Đàn</h2><h3>2.6 km, 6 min</h3>
<div class="steps">${STEPS.map(([a, b, end]) => `<div class="row"><span style="padding-right:${end ? 1838 - end : 0}px">${a}</span><b>${b}</b></div>`).join('')}</div>`);

/* ---------- trips dialog ---------- */
define('close-mark', `
<style>:host{display:block;width:14px;height:14px;color:#292929}svg{display:block}</style>
<svg width="14" height="14"><path d="M1.500 1.500L12.500 12.500M12.500 1.500L1.500 12.500" stroke="currentColor" stroke-width="2.500"/></svg>`);

define('action-button', `
<style>
:host{display:inline-flex;box-sizing:border-box;align-items:center;justify-content:center;height:32px;padding-bottom:1px;border-radius:4px;background:var(--tone);color:#6c6c6c;font-size:12px;font-weight:bold;white-space:nowrap}
:host([focused]){outline:2px solid #000;outline-offset:-1px}
</style><slot></slot>`);

define('trip-row', el => {
  const [id, status, src, dst, at] = el.getAttribute('cells').split('|');
  const f = el.hasAttribute('focused') ? 'focused' : '';
  return `
<style>
:host{display:grid;grid-template-columns:150px 82px 352px 353px 149px 353px;box-sizing:border-box;border-right:1px solid #575757}
div{box-sizing:border-box;border-left:1px solid #575757;border-bottom:1px solid #575757;padding-left:7px;display:flex;align-items:center;white-space:nowrap;overflow:hidden}
.act{align-items:flex-start;gap:9px;padding:var(--lead,11px) 0 0 16px}
</style>
<div>${id}</div><div>${status}</div><div>${src}</div><div>${dst}</div><div>${at}</div>
<div class="act"><action-button ${f} style="--tone:#19345f;width:94px">See Detail</action-button><action-button style="--tone:#5b131c;width:75px">Cancel</action-button>${status === '2' ? '<action-button style="--tone:#664200;width:100px">View Driver</action-button>' : ''}</div>`;
});

define('trip-head', `
<style>
:host{display:grid;grid-template-columns:150px 82px 352px 353px 149px 353px;box-sizing:border-box;height:33px;background:#1f2863;color:#6c6c6c;font-weight:bold;border:solid #575757;border-width:1px 1px 1px 0}
div{box-sizing:border-box;border-left:1px solid #5f5f5f;padding:1px 0 0 7.500px;display:flex;align-items:center}
</style>
<div>Trip ID</div><div>Status</div><div>Source</div><div>Destination</div><div>Created At</div><div>Action</div>`);

define('trips-dialog', `
<style>
:host{display:flex;flex-direction:column;box-sizing:border-box;width:1476px;height:588px;padding:18px;background:#666;border-radius:7px;box-shadow:0 4px 9px rgba(0,0,0,.25)}
header{display:flex;justify-content:space-between;padding:17px 1px 0 0;height:62px;box-sizing:content-box}
h2{margin:0;font-size:21.6px;line-height:25px;padding:1px 0 0 0}
close-mark{margin-top:6.500px}
.more{display:flex;justify-content:flex-end;padding:18px 4px 0 0}
</style>
<header><h2>Trips Created</h2><close-mark></close-mark></header>
<trip-head></trip-head>
<trip-row style="height:63px" cells="tq2ijixji4i8p0chiw3…|1|Vincom Center Ba Trieu|Lotte Center Hanoi|14:15:00 20/4/2024"></trip-row>
<trip-row style="height:64px" cells="n9lun34khs9zo3xk…|1|Vincom Center Ba Trieu||14:15:00 20/4/2024"></trip-row>
<trip-row style="height:64px" cells="q6xgxxlc89knyoca…|1|Vincom Center Ba Trieu||14:15:00 20/4/2024"></trip-row>
<trip-row style="height:63px;--lead:10px" focused cells="9c75d02e-ef59-48…|2|Hanoi Medical University||14:30:43 21/2/2025"></trip-row>
<trip-row style="height:64px" cells="873211109879chc…|2|Vincom Center Ba Trieu||14:15:00 20/6/2024"></trip-row>
<trip-row style="height:63px" cells="9chcowiooqy0lsg7…|2|Vincom Center Ba Trieu|Lotte Center Hanoi|14:15:00 20/6/2024"></trip-row>
<div class="more"><action-button style="--tone:#10155f;width:97px">Load More</action-button></div>`);

/* ---------- payment dialog ---------- */
define('pay-line', el => `
<style>
:host{display:flex;height:36px;line-height:36px;font-size:16px;white-space:nowrap}
i{flex:1;margin:0 9px 0 9.500px;height:22px;box-sizing:border-box;border-bottom:2px dotted #000}
</style>
<b>${el.getAttribute('label')}</b><i></i><span><slot></slot></span>`);

define('payment-dialog', `
<style>
:host{display:block;box-sizing:border-box;width:322px;height:292px;padding:0 13px;background:#fff;border-radius:6px;box-shadow:0 3px 9px rgba(0,0,0,.3)}
header{display:flex;justify-content:space-between;padding-top:31px;height:45px}
h3{margin:0;font-size:16.848px;line-height:20px}
close-mark{color:#666;margin:3px 2px 0 0}
.lines{padding-left:9px}
</style>
<header><h3>Detail Payment</h3><close-mark></close-mark></header>
<div class="lines">
<pay-line label="Price">3.1 $</pay-line><pay-line label="Voucher">- 1.5 $</pay-line><pay-line label="Total">1.6 $</pay-line><pay-line label="Payment Method">Cash</pay-line><pay-line label="Payment Status">Paid</pay-line>
</div>`);

define('save-road-app', `
<style>
:host{display:block;position:relative;width:1920px;height:919px;overflow:hidden}
.page{display:flex;flex-direction:column;height:919px}
main{flex:1;display:grid;grid-template-columns:471px 471px 942px;padding:19px 18px 10px;background:#f4f4f4}
.veil{position:absolute;inset:0;display:flex;justify-content:center;align-items:flex-start;box-sizing:border-box}
.veil.one{background:rgba(0,0,0,.5);padding-top:185px}
.veil.two{padding-top:361px}
</style>
<div class="page">
<top-bar></top-bar>
<main>
<side-card><span slot="title">Đặt xe</span>
<place-field><svg slot="icon" width="22" height="24" viewBox="0 0 22 24"><path d="M4.800 9.500h3v10.500h-3z" fill="#ddd" stroke="#000" stroke-width="1.200"/><circle cx="6.200" cy="6.500" r="4.600" fill="#f03018" stroke="#000" stroke-width="1.300"/></svg>Hanoi Medical University</place-field>
<place-field><svg slot="icon" width="22" height="24" viewBox="0 0 22 24"><defs><pattern id="chk" width="2.400" height="2.400" patternUnits="userSpaceOnUse"><rect width="2.400" height="2.400" fill="#ddd"/><path d="M0 0h1.200v1.200H0zM1.200 1.200h1.200v1.200H1.200z" fill="#444"/></pattern></defs><path d="M1.800 2h2.400v19.500h-2.400z" fill="#ddd" stroke="#000" stroke-width="1.200"/><path d="M4.200 4.500Q8 2.500 12 4.200T20 3.500V13.500Q16 15.500 12 14T4.200 14.500Z" fill="url(#chk)" stroke="#000" stroke-width="1.200"/></svg>Hanoi University of Science and Technology</place-field>
</side-card>
<side-card><span slot="title">Chọn chuyến xe</span></side-card>
<city-map><map-zoom></map-zoom><route-panel></route-panel><map-credit></map-credit></city-map>
</main>
</div>
<div class="veil one"><trips-dialog></trips-dialog></div>
<div class="veil two"><payment-dialog></payment-dialog></div>`);
</script>
</body>
</html>
